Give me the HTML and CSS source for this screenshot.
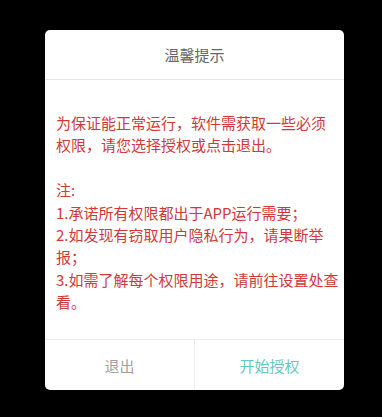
FILE: index.html
```html
<!DOCTYPE html>
<html lang="zh">
<head>
<meta charset="utf-8">
<link rel="stylesheet" href="styles.css">
</head>
<body>
<div class="dialog">
  <div class="header">温馨提示</div>
  <div class="content">
    <p>为保证能正常运行，软件需获取一些必须权限，请您选择授权或点击退出。</p>
    <p class="gap">注:</p>
    <p>1.承诺所有权限都出于APP运行需要；</p>
    <p>2.如发现有窃取用户隐私行为，请果断举报；</p>
    <p>3.如需了解每个权限用途，请前往设置处查看。</p>
  </div>
  <div class="actions">
    <div class="btn exit">退出</div>
    <div class="btn ok">开始授权</div>
  </div>
</div>
</body>
</html>
```
FILE: styles.css
```css
html, body {
  margin: 0;
  padding: 0;
  background: #000;
  width: 382px;
  height: 417px;
  overflow: hidden;
  font-family: "Noto Sans CJK SC", "Noto Sans", sans-serif;
}
.dialog {
  margin: 30px 0 0 45px;
  width: 299px;
  height: 360px;
  background: #fff;
  border-radius: 5px;
  display: flex;
  flex-direction: column;
  overflow: hidden;
}
.header {
  height: 49px;
  border-bottom: 1px solid #e6e6e6;
  display: flex;
  align-items: center;
  justify-content: center;
  font-size: 15px;
  color: #666;
}
.content {
  flex: 1;
  padding: 32px 4px 0 11px;
  color: #d2383a;
  font-size: 15px;
  line-height: 22.4px;
}
.content p {
  margin: 0;
}
.content .gap {
  margin-top: 22.4px;
}
.actions {
  height: 50px;
  border-top: 1px solid #ececec;
  display: flex;
}
.btn {
  flex: 1;
  display: flex;
  align-items: center;
  justify-content: center;
  font-size: 15px;
}
.exit {
  color: #a0a0a0;
  border-right: 1px solid #ececec;
}
.ok {
  color: #66c7c2;
}
```
